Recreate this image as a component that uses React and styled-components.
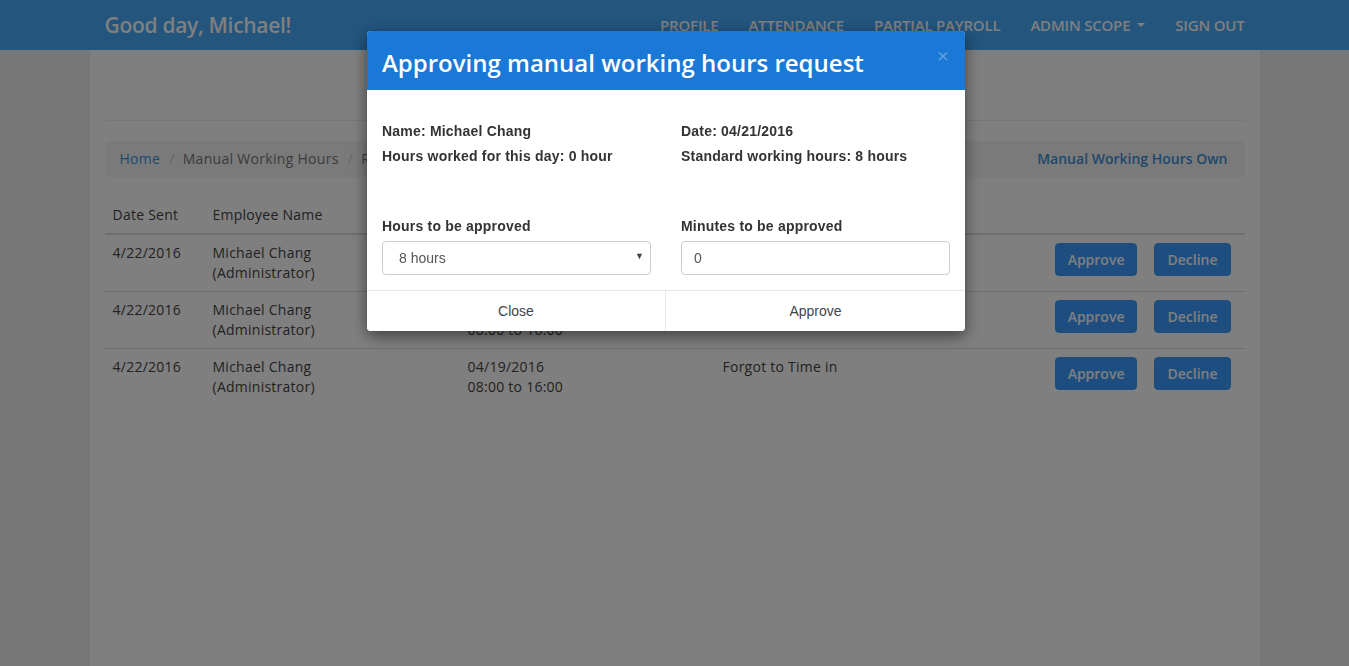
import React from "react";
import styled, { createGlobalStyle } from "styled-components";

const GlobalStyle = createGlobalStyle`
  html, body {
    margin: 0;
    padding: 0;
    background: #eeeeee;
    font-family: "Open Sans", "Liberation Sans", Arial, sans-serif;
    font-size: 14px;
    color: #444;
    overflow: hidden;
  }
  * {
    box-sizing: border-box;
  }
`;

const NavBar = styled.div`
  height: 50px;
  background: #46aafa;
`;

const NavInner = styled.div`
  width: 1170px;
  height: 100%;
  margin: 0 auto;
  padding: 0 15px;
  display: flex;
  align-items: center;
  justify-content: space-between;
`;

const Brand = styled.div`
  font-size: 21px;
  font-weight: 600;
  color: #fff;
  letter-spacing: -0.3px;
`;

const NavLinks = styled.ul`
  display: flex;
  margin: 0 -15px 0 0;
  padding: 0;
  list-style: none;
`;

const NavLink = styled.li`
  padding: 0 15px;
  font-size: 15px;
  font-weight: 600;
  color: #fff;
  letter-spacing: -0.2px;
  display: flex;
  align-items: center;
  gap: 6px;
`;

const Caret = styled.span`
  width: 0;
  height: 0;
  border-left: 4px solid transparent;
  border-right: 4px solid transparent;
  border-top: 4px solid #fff;
  margin-left: 1px;
`;

const Container = styled.div`
  width: 1170px;
  min-height: calc(100vh - 50px);
  margin: 0 auto;
  padding: 0 15px;
  background: #fff;
`;

const PageHead = styled.div`
  height: 71px;
  border-bottom: 1px solid #eee;
  margin-bottom: 20px;
`;

const Breadcrumb = styled.div`
  display: flex;
  justify-content: space-between;
  align-items: center;
  padding: 8px 15px;
  line-height: 20px;
  background: #f5f5f5;
  border-radius: 4px;
  margin-bottom: 20px;
`;

const Crumbs = styled.ol`
  display: flex;
  margin: 0;
  padding: 0;
  list-style: none;
  letter-spacing: 0.3px;

  li + li::before {
    content: "/";
    padding: 0 8px 0 9px;
    color: #ccc;
  }
`;

const Crumb = styled.li`
  color: ${({ $link }) => ($link ? "#3f8fd8" : "#777")};
`;

const OwnLink = styled.a`
  color: #3f8fd8;
  font-weight: 600;
  text-decoration: none;
  margin-right: 2px;
`;

const HeadRow = styled.div`
  display: grid;
  grid-template-columns: 100px 255px 255px 1fr 200px;
  border-bottom: 2px solid #ddd;
  line-height: 20px;
  letter-spacing: 0.25px;
`;

const BodyRow = styled(HeadRow)`
  border-bottom: none;
  & + & {
    border-top: 1px solid #ddd;
  }
`;

const Cell = styled.div`
  padding: 8px;
  color: #444;
`;

const Actions = styled.div`
  display: flex;
  justify-content: flex-end;
  gap: 17px;
  padding: 8px 14px 8px 8px;
`;

const Btn = styled.button`
  height: 33px;
  padding: 0 12px;
  border: 1px solid #3a9af7;
  border-radius: 4px;
  background: #3a9dff;
  color: #fff;
  font-family: "Open Sans", sans-serif;
  font-size: 14px;
  font-weight: 600;
`;

const Backdrop = styled.div`
  position: fixed;
  inset: 0;
  background: rgba(0, 0, 0, 0.5);
  z-index: 10;
`;

const Modal = styled.div`
  position: fixed;
  top: 31px;
  left: 367px;
  width: 598px;
  background: #fff;
  border-radius: 4px;
  box-shadow: 0 5px 15px rgba(0, 0, 0, 0.5);
  z-index: 20;
  overflow: hidden;
`;

const ModalHeader = styled.div`
  position: relative;
  background: #1a78d6;
  padding: 17px 15px 13px;
`;

const ModalTitle = styled.h4`
  margin: 0;
  color: #fff;
  font-size: 24px;
  font-weight: 600;
  line-height: 29px;
`;

const CloseX = styled.span`
  position: absolute;
  top: 13px;
  right: 16px;
  font-family: "Liberation Sans", Arial, sans-serif;
  font-size: 21px;
  color: rgba(190, 205, 225, 0.45);
`;

const ModalBody = styled.div`
  padding: 29px 15px 15px;
  font-family: "Liberation Sans", Arial, sans-serif;
  color: #333;
`;

const TwoCols = styled.div`
  display: grid;
  grid-template-columns: 1fr 1fr;
  column-gap: 30px;
  margin-top: ${({ $top }) => $top || 0}px;
`;

const Info = styled.div`
  font-size: 14px;
  font-weight: bold;
  line-height: 25px;
  letter-spacing: 0.2px;
`;

const Label = styled.label`
  display: block;
  font-size: 14px;
  font-weight: bold;
  line-height: 18px;
  letter-spacing: 0.2px;
  margin-bottom: 6px;
`;

const SelectWrap = styled.div`
  position: relative;
`;

const Select = styled.select`
  width: 100%;
  height: 34px;
  padding: 0 12px 0 16px;
  border: 1px solid #ccc;
  border-radius: 4px;
  background: #fff;
  font-family: "Liberation Sans", Arial, sans-serif;
  font-size: 14px;
  color: #555;
  appearance: none;
`;

const Arrow = styled.span`
  position: absolute;
  right: 7px;
  top: 10px;
  font-size: 9px;
  color: #444;
  pointer-events: none;
`;

const Input = styled.input`
  width: 100%;
  height: 34px;
  padding: 0 12px;
  border: 1px solid #ccc;
  border-radius: 4px;
  font-family: "Liberation Sans", Arial, sans-serif;
  font-size: 14px;
  color: #555;
`;

const ModalFooter = styled.div`
  display: grid;
  grid-template-columns: 298px 1fr;
  border-top: 1px solid #e5e5e5;
`;

const FooterBtn = styled.button`
  height: 40px;
  border: none;
  background: #fff;
  font-family: "Liberation Sans", Arial, sans-serif;
  font-size: 14px;
  color: #444;
  & + & {
    border-left: 1px solid #e5e5e5;
  }
`;

const requests = [
  { sent: "4/22/2016", date: "04/21/2016", reason: "Forgot to Time in" },
  { sent: "4/22/2016", date: "04/20/2016", reason: "Forgot to Time in" },
  { sent: "4/22/2016", date: "04/19/2016", reason: "Forgot to Time in" },
];

export default function App() {
  return (
    <>
      <GlobalStyle />
      <NavBar>
        <NavInner>
          <Brand>Good day, Michael!</Brand>
          <NavLinks>
            <NavLink>PROFILE</NavLink>
            <NavLink>ATTENDANCE</NavLink>
            <NavLink>PARTIAL PAYROLL</NavLink>
            <NavLink>
              ADMIN SCOPE <Caret />
            </NavLink>
            <NavLink>SIGN OUT</NavLink>
          </NavLinks>
        </NavInner>
      </NavBar>

      <Container>
        <PageHead />
        <Breadcrumb>
          <Crumbs>
            <Crumb $link>Home</Crumb>
            <Crumb>Manual Working Hours</Crumb>
            <Crumb>Requests</Crumb>
          </Crumbs>
          <OwnLink href="#">Manual Working Hours Own</OwnLink>
        </Breadcrumb>

        <HeadRow>
          <Cell>Date Sent</Cell>
          <Cell>Employee Name</Cell>
          <Cell>Date Requested</Cell>
          <Cell>Reason</Cell>
          <Cell />
        </HeadRow>
        {requests.map((r, i) => (
          <BodyRow key={i}>
            <Cell>{r.sent}</Cell>
            <Cell>
              Michael Chang
              <br />
              (Administrator)
            </Cell>
            <Cell>
              {r.date}
              <br />
              08:00 to 16:00
            </Cell>
            <Cell>{r.reason}</Cell>
            <Actions>
              <Btn>Approve</Btn>
              <Btn>Decline</Btn>
            </Actions>
          </BodyRow>
        ))}
      </Container>

      <Backdrop />
      <Modal>
        <ModalHeader>
          <ModalTitle>Approving manual working hours request</ModalTitle>
          <CloseX>×</CloseX>
        </ModalHeader>
        <ModalBody>
          <TwoCols>
            <div>
              <Info>Name: Michael Chang</Info>
              <Info>Hours worked for this day: 0 hour</Info>
            </div>
            <div>
              <Info>Date: 04/21/2016</Info>
              <Info>Standard working hours: 8 hours</Info>
            </div>
          </TwoCols>
          <TwoCols $top={48}>
            <div>
              <Label>Hours to be approved</Label>
              <SelectWrap>
                <Select defaultValue="8">
                  <option value="8">8 hours</option>
                </Select>
                <Arrow>▼</Arrow>
              </SelectWrap>
            </div>
            <div>
              <Label>Minutes to be approved</Label>
              <Input defaultValue="0" />
            </div>
          </TwoCols>
        </ModalBody>
        <ModalFooter>
          <FooterBtn>Close</FooterBtn>
          <FooterBtn>Approve</FooterBtn>
        </ModalFooter>
      </Modal>
    </>
  );
}
